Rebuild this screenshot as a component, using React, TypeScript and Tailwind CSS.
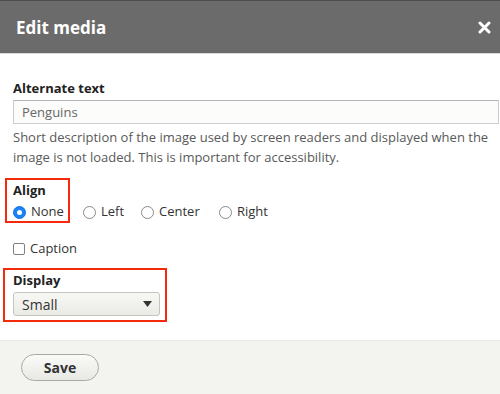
import { useState } from 'react'

const FONT = { fontFamily: '"Open Sans", "DejaVu Sans", sans-serif' }

const ALIGN = ['None', 'Left', 'Center', 'Right']

function Radio({ checked }: { checked: boolean }) {
  return checked ? (
    <span className="w-[13px] h-[13px] rounded-full bg-[#1a82fb] border border-[#1570e0] flex items-center justify-center shrink-0">
      <span className="w-[5px] h-[5px] rounded-full bg-white" />
    </span>
  ) : (
    <span className="w-[13px] h-[13px] rounded-full bg-white border border-[#8a8a8a] shrink-0" />
  )
}

export default function App() {
  const [align, setAlign] = useState('None')
  const [caption, setCaption] = useState(false)

  return (
    <div className="w-[500px] h-[394px] bg-white flex flex-col overflow-hidden text-[#333]" style={FONT}>
      {/* Title bar */}
      <div className="h-[54px] bg-[#6b6b6b] border-t border-[#4e4e4e] border-b border-b-[#d8d8d8] flex items-center justify-between pl-4 pr-[9px] shrink-0">
        <span className="text-white font-bold text-[17px] leading-none pt-[1px]">Edit media</span>
        <svg width="13" height="13" viewBox="0 0 13 13" className="mt-[1px]">
          <path d="M2 2 L11 11 M11 2 L2 11" stroke="#fff" strokeWidth="3" strokeLinecap="round" />
        </svg>
      </div>

      {/* Body */}
      <div className="flex-1 pl-[13px] pr-[1px] pt-[25px]">
        <label className="block font-bold text-[13px] leading-[18px] text-[#222]">Alternate text</label>
        <input
          readOnly
          value="Penguins"
          className="mt-[3px] w-full h-[24px] px-2 text-[13px] text-[#666] bg-[#fcfcfa] border border-[#ccc] border-t-[#b4b4b4] outline-none"
        />
        <p className="text-[13px] leading-[20px] text-[#595959] mt-[3px]">
          Short description of the image used by screen readers and displayed when the image is not loaded. This is important for accessibility.
        </p>

        {/* Align */}
        <div className="relative mt-[12px]">
          <div className="absolute left-[-8px] top-[-1px] w-[65px] h-[45px] border-2 border-[#f52a0c] pointer-events-none" />
          <div className="font-bold text-[13px] leading-[18px] text-[#222] pt-[2px]">Align</div>
          <div className="flex items-center h-[26px] text-[13px]">
            {ALIGN.map((a) => (
              <button
                key={a}
                onClick={() => setAlign(a)}
                className={`flex items-center gap-[5px] ${a === 'None' ? 'w-[70px]' : a === 'Left' ? 'w-[58px]' : a === 'Center' ? 'w-[78px]' : ''}`}
              >
                <Radio checked={align === a} />
                <span className="text-[#333]">{a}</span>
              </button>
            ))}
          </div>
        </div>

        {/* Caption */}
        <button onClick={() => setCaption(!caption)} className="flex items-center gap-[5px] mt-[11px] h-[26px] text-[13px]">
          <span className={`w-[12px] h-[12px] rounded-[2px] border border-[#7f7f7f] ${caption ? 'bg-[#1a82fb]' : 'bg-white'}`} />
          <span className="text-[#333]">Caption</span>
        </button>

        {/* Display */}
        <div className="relative mt-[9px]">
          <div className="absolute left-[-10px] top-[-3px] w-[164px] h-[54px] border-2 border-[#f52a0c] pointer-events-none" />
          <div className="font-bold text-[13px] leading-[18px] text-[#222]">Display</div>
          <div className="mt-[3px] w-[147px] h-[24px] rounded-[3px] border border-[#c5c5c0] bg-gradient-to-b from-[#f7f7f4] to-[#ebebe6] flex items-center justify-between pl-2 pr-[7px] text-[14px] text-[#333]">
            <span>Small</span>
            <svg width="9" height="6" viewBox="0 0 9 6">
              <path d="M0 0 H9 L4.5 6 Z" fill="#333" />
            </svg>
          </div>
        </div>
      </div>

      {/* Footer */}
      <div className="h-[54px] bg-[#f3f3ef] border-t border-[#ebebe6] flex items-center pl-[21px] shrink-0">
        <button className="w-[78px] h-[27px] rounded-full border border-[#a8a8a4] bg-gradient-to-b from-[#fafaf8] to-[#e8e8e4] font-bold text-[14px] text-[#333]">
          Save
        </button>
      </div>
    </div>
  )
}
